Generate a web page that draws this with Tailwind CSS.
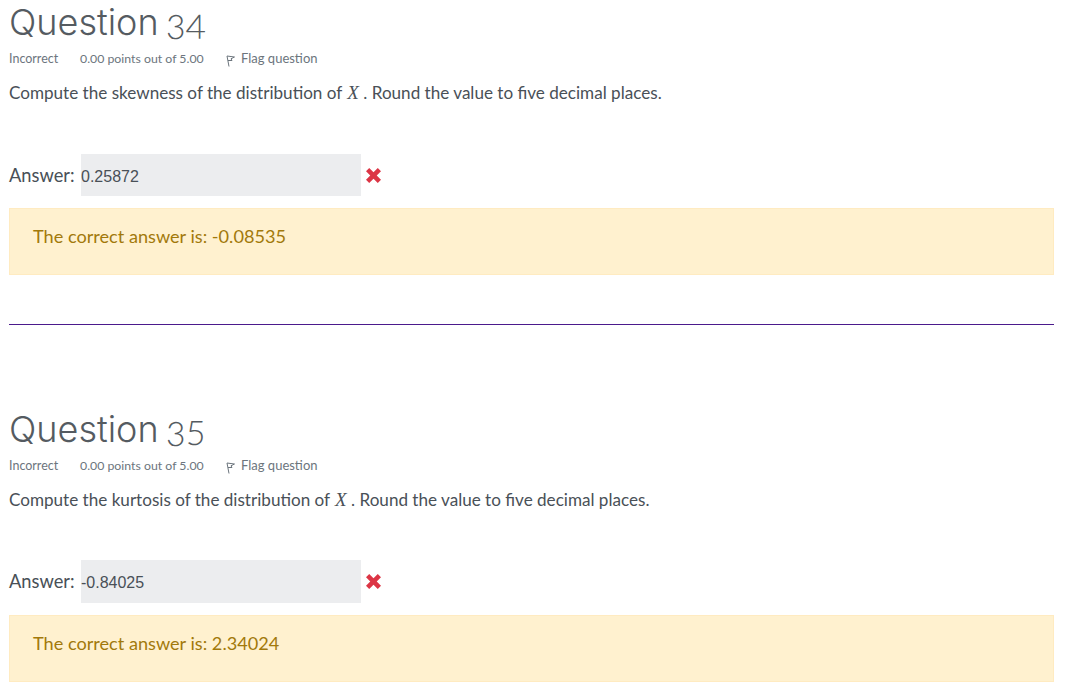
<!doctype html>
<html lang="en">
  <head>
    <meta charset="UTF-8" />
    <meta name="viewport" content="width=device-width, initial-scale=1.0" />
    <title>Quiz review</title>
    <script src="https://cdn.jsdelivr.net/npm/@tailwindcss/browser@4"></script>
  </head>
  <body class="bg-white font-['Lato',sans-serif] text-[#495057] overflow-hidden h-[699px]">
    <div class="pl-[9px] pr-[14px]">
      <!-- Question 34 -->
      <section class="h-[407px] -mt-[2px]">
        <h2 class="h-[46px] font-['Inter',sans-serif] font-light text-[36px] leading-[46px] text-[#555b61]">Question <span class="font-['Lato',sans-serif] text-[37px] oldstyle-nums -ml-[3px]">34</span></h2>
        <div class="flex items-center h-[18px] mt-[6px] text-[12.5px] text-[#6c757d]">
          <span class="w-[71px]">Incorrect</span>
          <span class="w-[146px] text-[12.3px]">0.00 points out of 5.00</span>
          <svg class="w-[9px] h-[12px] mr-[6px] mt-[3px]" viewBox="0 0 9 12" fill="none" stroke="#6c757d" stroke-width="1"><path d="M1 1 L8.500 2 L5 3.800 L6 5.500 L2 5.500 M1 1 L3 11.500" /></svg>
          <span class="text-[13px]">Flag question</span>
        </div>
        <p class="mt-[13px] h-[24px] text-[17.100px] leading-[24px]">Compute the skewness of the distribution of <span class="font-['Liberation_Serif',serif] italic text-[19px] ml-[1px]">X</span> . Round the value to five decimal places.</p>
        <div class="flex items-center mt-[49px] h-[42px]">
          <span class="w-[72px] pt-[1px] text-[18.300px]">Answer:</span>
          <div class="w-[280px] h-[42px] bg-[#ecedef] flex items-center pt-[3px] font-['Liberation_Sans',sans-serif] text-[16px]">0.25872</div>
          <svg class="w-[15px] h-[15px] ml-[5px] mt-[1px]" viewBox="0 0 14 14"><path d="M3 0 L7 4 L11 0 L14 3 L10 7 L14 11 L11 14 L7 10 L3 14 L0 11 L4 7 L0 3 Z" fill="#dc3545" /></svg>
        </div>
        <div class="mt-[12px] h-[67px] bg-[#fff1cf] border border-[#ffebc1] pl-[23px] pt-[15px] text-[18.150px] leading-[24px] text-[#a2790b]">The correct answer is: -0.08535</div>
        <hr class="mt-[49px] border-0 h-px bg-[#4b1a8c]" />
      </section>
      <!-- Question 35 -->
      <section>
        <h2 class="h-[46px] font-['Inter',sans-serif] font-light text-[36px] leading-[46px] text-[#555b61]">Question <span class="font-['Lato',sans-serif] text-[37px] oldstyle-nums -ml-[3px]">35</span></h2>
        <div class="flex items-center h-[18px] mt-[6px] text-[12.5px] text-[#6c757d]">
          <span class="w-[71px]">Incorrect</span>
          <span class="w-[146px] text-[12.3px]">0.00 points out of 5.00</span>
          <svg class="w-[9px] h-[12px] mr-[6px] mt-[3px]" viewBox="0 0 9 12" fill="none" stroke="#6c757d" stroke-width="1"><path d="M1 1 L8.500 2 L5 3.800 L6 5.500 L2 5.500 M1 1 L3 11.500" /></svg>
          <span class="text-[13px]">Flag question</span>
        </div>
        <p class="mt-[13px] h-[24px] text-[17.100px] leading-[24px]">Compute the kurtosis of the distribution of <span class="font-['Liberation_Serif',serif] italic text-[19px] ml-[1px]">X</span> . Round the value to five decimal places.</p>
        <div class="flex items-center mt-[48px] h-[43px]">
          <span class="w-[72px] pt-[1px] text-[18.300px]">Answer:</span>
          <div class="w-[280px] h-[43px] bg-[#ecedef] flex items-center pt-[3px] font-['Liberation_Sans',sans-serif] text-[16px]">-0.84025</div>
          <svg class="w-[15px] h-[15px] ml-[5px]" viewBox="0 0 14 14"><path d="M3 0 L7 4 L11 0 L14 3 L10 7 L14 11 L11 14 L7 10 L3 14 L0 11 L4 7 L0 3 Z" fill="#dc3545" /></svg>
        </div>
        <div class="mt-[12px] h-[67px] bg-[#fff1cf] border border-[#ffebc1] pl-[23px] pt-[15px] text-[18.150px] leading-[24px] text-[#a2790b]">The correct answer is: 2.34024</div>
      </section>
    </div>
  </body>
</html>
